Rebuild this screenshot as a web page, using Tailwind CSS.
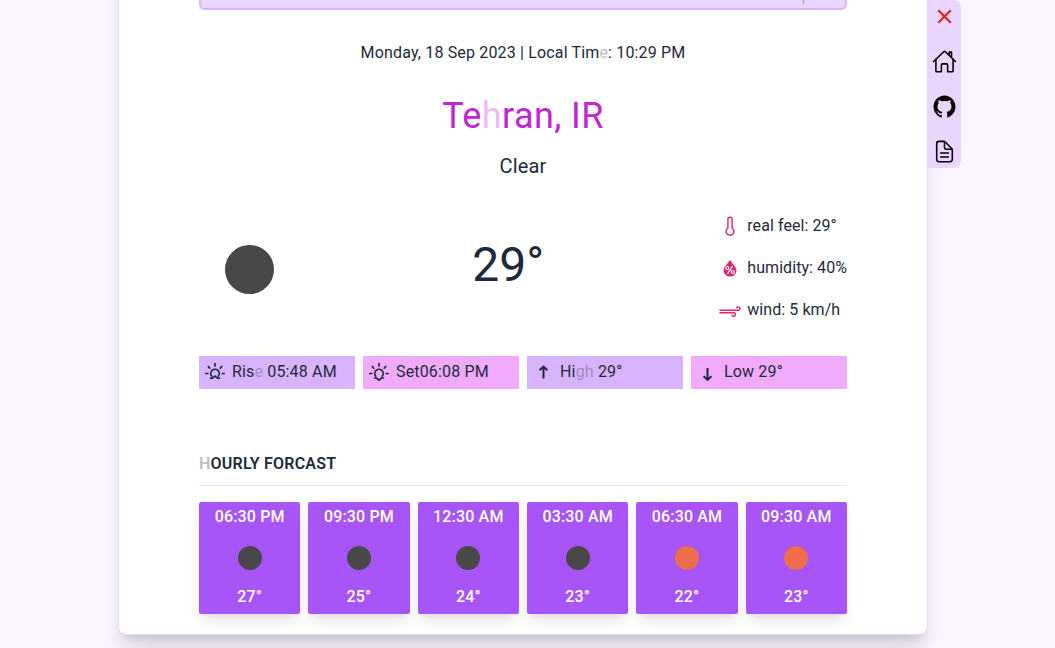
<!DOCTYPE html>
<html lang="en">
<head>
<meta charset="utf-8">
<title>Weather</title>
<script src="https://cdn.jsdelivr.net/npm/@tailwindcss/browser@4"></script>
</head>
<body class="h-screen overflow-hidden bg-[#faf5ff] font-['Roboto',sans-serif] font-normal tracking-[0.16px] text-[#1e293b]">
<div class="flex h-full items-start pl-[118px]">
  <main class="-mt-[100px] h-[735px] w-[810px] shrink-0 rounded-lg border border-[#e9d5ff] bg-white px-20 pt-[79px] shadow-[0_20px_25px_-5px_rgb(0_0_0/0.13),0_8px_10px_-6px_rgb(0_0_0/0.13)]">
    <div class="flex h-[30px] items-end justify-end rounded-md border-2 border-[#d8b4fe] bg-[#e9d5ff] pr-[41px] pb-1"><span class="h-5 w-px bg-[#c084fc]"></span></div>
    <p class="mt-[31px] text-center text-base leading-6">Monday, 18 Sep 2023 | Local Tim<span class="opacity-30">e</span>: 10:29 PM</p>
    <h1 class="mt-[31px] text-center text-4xl leading-10 tracking-[0.4px] text-[#c026d3]">Te<span class="opacity-30">h</span>ran, IR</h1>
    <p class="mt-4 text-center text-xl leading-7">Clear</p>
    <section class="mt-[34px] flex h-[108px] items-center justify-between">
      <div class="mt-0.5 ml-[26px] size-[49px] rounded-full bg-[#48484a]"></div>
      <p class="ml-[23px] pb-1.5 text-5xl tracking-normal">29°</p>
      <ul class="flex flex-col gap-[18px] text-base leading-6 tracking-[0.07px]">
        <li class="flex items-center gap-1.5"><svg class="size-[22px] text-[#db2777]" viewBox="0 0 22 22" fill="none" stroke="currentColor" stroke-width="1.400"><path d="M8.900 12.900V4.300a2.100 2.100 0 0 1 4.200 0v8.600a4 4 0 1 1-4.200 0Z"/></svg>real feel: 29°</li>
        <li class="flex items-center gap-1.5"><svg class="size-[22px] text-[#db2777]" viewBox="0 0 22 22" fill="none"><path d="M11 3c2 3.500 6.500 7 6.500 10.300a6.500 6.300 0 0 1-13 0C4.500 10 9 6.500 11 3Z" fill="currentColor"/><path d="m13.500 9-5 8" stroke="#fff" stroke-width="1.300"/><circle cx="8.300" cy="11" r="1.500" stroke="#fff" stroke-width="1.200"/><circle cx="13.800" cy="15" r="1.500" stroke="#fff" stroke-width="1.200"/></svg>humidity: 40%</li>
        <li class="flex items-center gap-1.5"><svg class="size-[22px] text-[#db2777]" viewBox="0 0 22 22" fill="none" stroke="currentColor" stroke-width="1.500" stroke-linecap="round"><path d="M1 11.200h18.200a1.600 1.600 0 0 0 0-3.400 1.500 1.500 0 0 0-1.500 1M1 13.800h13.700a1.600 1.600 0 0 1 0 3.400 1.500 1.500 0 0 1-1.500-1"/></svg>wind: 5 km/h</li>
      </ul>
    </section>
    <section class="mt-[34px] grid grid-cols-4 gap-2 text-base leading-6">
      <div class="flex h-[33px] items-center bg-[#d8b4fe] pb-0.5 pl-[5px]"><svg class="mr-1.5 size-[22px]" viewBox="0 0 22 22" fill="none" stroke="currentColor" stroke-width="1.700" stroke-linecap="round"><path d="M11 2.500v2.500M4.300 5.500l1.500 1.700M17.700 5.500l-1.500 1.700M1.800 12.500h2M18.200 12.500h2M7.800 15.200a4.200 4.200 0 1 1 6.400 0"/><path d="M6.600 17.200h1.900l2.500-2.100 2.500 2.100h1.900"/></svg>Ris<span class="opacity-30">e</span>&nbsp;05:48 AM</div>
      <div class="flex h-[33px] items-center bg-[#f0abfc] pb-0.5 pl-[5px]"><svg class="mr-1.5 size-[22px]" viewBox="0 0 22 22" fill="none" stroke="currentColor" stroke-width="1.700" stroke-linecap="round"><path d="M11 2.500v2.500M4.300 5.500l1.500 1.700M17.700 5.500l-1.500 1.700M1.800 12.500h2M18.200 12.500h2M7.800 15.200a4.200 4.200 0 1 1 6.400 0"/><path d="M6.600 17h1.900l2.500 2.100 2.500-2.100h1.900"/></svg>Set06:08 PM</div>
      <div class="flex h-[33px] items-center bg-[#d8b4fe] pb-0.5 pl-[5px]"><svg class="mr-1.5 size-[22px]" viewBox="0 0 22 22" fill="none" stroke="currentColor" stroke-width="2"><path d="M11.500 17.500V6M7.600 9.200l3.900-3.500 3.900 3.500"/></svg>Hi<span class="opacity-30">gh</span>&nbsp;29°</div>
      <div class="flex h-[33px] items-center bg-[#f0abfc] pb-0.5 pl-[5px]"><svg class="mr-1.5 size-[22px]" viewBox="0 0 22 22" fill="none" stroke="currentColor" stroke-width="2"><path d="M11.500 7v11.500M7.600 15.300l3.900 3.500 3.900-3.500"/></svg>Low 29°</div>
    </section>
    <h2 class="mt-[63px] text-base leading-6 font-semibold tracking-[0.22px]"><span class="opacity-30">H</span>OURLY FORCAST</h2>
    <hr class="mt-[9px] border-[#e5e7eb]">
    <section class="mt-4 grid grid-cols-6 gap-2 text-center text-base leading-6 font-medium text-white">
      <div class="flex h-28 flex-col items-center justify-between rounded-xs bg-[#a855f7] pt-[3px] pb-[5px] shadow-lg"><p>06:30 PM</p><i class="mt-0.5 size-6 rounded-full bg-[#48484a]"></i><p>27°</p></div>
      <div class="flex h-28 flex-col items-center justify-between rounded-xs bg-[#a855f7] pt-[3px] pb-[5px] shadow-lg"><p>09:30 PM</p><i class="mt-0.5 size-6 rounded-full bg-[#48484a]"></i><p>25°</p></div>
      <div class="flex h-28 flex-col items-center justify-between rounded-xs bg-[#a855f7] pt-[3px] pb-[5px] shadow-lg"><p>12:30 AM</p><i class="mt-0.5 size-6 rounded-full bg-[#48484a]"></i><p>24°</p></div>
      <div class="flex h-28 flex-col items-center justify-between rounded-xs bg-[#a855f7] pt-[3px] pb-[5px] shadow-lg"><p>03:30 AM</p><i class="mt-0.5 size-6 rounded-full bg-[#48484a]"></i><p>23°</p></div>
      <div class="flex h-28 flex-col items-center justify-between rounded-xs bg-[#a855f7] pt-[3px] pb-[5px] shadow-lg"><p>06:30 AM</p><i class="mt-0.5 size-6 rounded-full bg-[#ec6e4c]"></i><p>22°</p></div>
      <div class="flex h-28 flex-col items-center justify-between rounded-xs bg-[#a855f7] pt-[3px] pb-[5px] shadow-lg"><p>09:30 AM</p><i class="mt-0.5 size-6 rounded-full bg-[#ec6e4c]"></i><p>23°</p></div>
    </section>
  </main>
  <nav class="z-10 -ml-px flex h-[168px] w-[34px] flex-col items-center gap-5 rounded-r-lg bg-[#e9d5ff] pt-1 text-black">
    <svg class="size-[25px] text-[#dc2626]" viewBox="0 0 25 25" fill="none" stroke="currentColor" stroke-width="2.300"><path d="m6.300 6.300 12.400 12.400M18.700 6.300l-12.400 12.400"/></svg>
    <svg class="size-[25px]" viewBox="0 0 512 512" fill="none" stroke="currentColor" stroke-width="32" stroke-linecap="round" stroke-linejoin="round"><path d="M80 212v236a16 16 0 0 0 16 16h96V328a24 24 0 0 1 24-24h80a24 24 0 0 1 24 24v136h96a16 16 0 0 0 16-16V212"/><path d="M480 256 266.890 52c-5-5.280-16.690-5.340-21.780 0L32 256M400 179V64h-48v69"/></svg>
    <svg class="size-[25px]" viewBox="0 0 512 512" fill="currentColor"><path d="M256 32C132.300 32 32 134.900 32 261.700c0 101.500 64.200 187.500 153.200 217.900a17.560 17.560 0 0 0 3.800.4c8.300 0 11.500-6.100 11.500-11.400 0-5.500-.2-19.900-.3-39.100a102.400 102.400 0 0 1-22.600 2.700c-43.100 0-52.900-33.500-52.900-33.500-10.200-26.500-24.900-33.600-24.900-33.600-19.500-13.700-.1-14.100 1.400-14.100h.1c22.500 2 34.300 23.800 34.300 23.800 11.200 19.600 26.200 25.100 39.600 25.100a63 63 0 0 0 25.600-6c2-14.800 7.800-24.900 14.200-30.700-49.700-5.800-102-25.500-102-113.500 0-25.100 8.700-45.600 23-61.600-2.300-5.800-10-29.200 2.200-60.800a18.640 18.640 0 0 1 5-.5c8.100 0 26.400 3.100 56.600 24.100a208.210 208.210 0 0 1 112.200 0c30.200-21 48.500-24.100 56.600-24.100a18.640 18.640 0 0 1 5 .5c12.200 31.600 4.500 55 2.200 60.800 14.300 16.100 23 36.600 23 61.600 0 88.200-52.400 107.600-102.300 113.300 8 7.100 15.200 21.100 15.200 42.500 0 30.700-.3 55.500-.3 63 0 5.400 3.100 11.500 11.400 11.500a19.350 19.350 0 0 0 4-.4C415.900 449.200 480 363.100 480 261.700 480 134.900 379.700 32 256 32z"/></svg>
    <svg class="size-[25px]" viewBox="0 0 512 512" fill="none" stroke="currentColor" stroke-width="32" stroke-linecap="round" stroke-linejoin="round"><path d="M416 221.250V416a48 48 0 0 1-48 48H144a48 48 0 0 1-48-48V96a48 48 0 0 1 48-48h98.750a32 32 0 0 1 22.620 9.370l141.260 141.260a32 32 0 0 1 9.370 22.620z"/><path d="M256 56v120a32 32 0 0 0 32 32h120M176 288h160M176 368h160"/></svg>
  </nav>
</div>
</body>
</html>
